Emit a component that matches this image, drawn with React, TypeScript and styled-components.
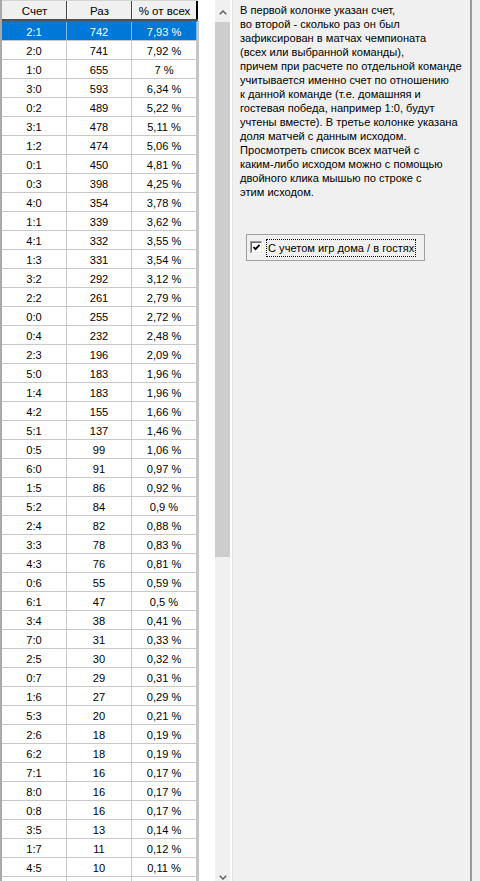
import React from "react";
import styled, { createGlobalStyle } from "styled-components";

const GlobalStyle = createGlobalStyle`
  html, body {
    margin: 0;
    padding: 0;
    background: #f0f0f0;
  }
  body {
    font-family: "Liberation Sans", Arial, sans-serif;
    font-size: 11.1px;
    color: #000;
  }
  * { box-sizing: border-box; }
`;

const Page = styled.div`
  display: flex;
  height: 881px;
  overflow: hidden;
  background: #f0f0f0;
`;

const ListPane = styled.div`
  width: 215px;
  flex: none;
  background: #fff;
  border-left: 2px solid #a9a9a9;
  display: flex;
  flex-direction: column;
`;

const HeaderRow = styled.div`
  display: grid;
  grid-template-columns: 65px 65px 66px;
  height: 21px;
  border-top: 1px solid #d4d4d4;
  border-bottom: 2px solid #505050;
  width: 196px;
`;

const HeaderCell = styled.div<{ $first?: boolean; $last?: boolean }>`
  background: #f0f0f0;
  border-left: 1px solid ${(p) => (p.$first ? "#f0f0f0" : "#ffffff")};
  border-right: ${(p) => (p.$last ? "2px solid #000" : "1px solid #404040")};
  text-align: center;
  padding-top: 2px;
  line-height: 16px;
  height: 18px;
  white-space: nowrap;
  font-size: 11.5px;
`;

const Body = styled.div`
  width: 197px;
  flex: 1;
  border-right: 2px solid #c4c4c4;
  overflow: hidden;
`;

const Row = styled.div<{ $selected?: boolean }>`
  display: grid;
  grid-template-columns: 65px 65px 65px;
  height: 19px;
  border-top: 1px solid ${(p) => (p.$selected ? "#0078d7" : "#c8c8c8")};
  background: ${(p) => (p.$selected ? "#0078d7" : "#fff")};
  color: ${(p) => (p.$selected ? "#fff" : "#000")};
`;

const Cell = styled.div<{ $selected?: boolean }>`
  border-right: 1px solid ${(p) => (p.$selected ? "#7fbbeb" : "#c8c8c8")};
  text-align: center;
  padding-top: 2px;
  line-height: 16px;
  height: 18px;
  white-space: nowrap;
`;

const ScrollBar = styled.div`
  width: 15px;
  flex: none;
  background: #f0f0f0;
  display: flex;
  flex-direction: column;
`;

const ArrowButton = styled.div<{ $h: number; $pad: number }>`
  height: ${(p) => p.$h}px;
  padding-top: ${(p) => p.$pad}px;
  display: flex;
  justify-content: center;
  align-items: flex-start;
  flex: none;
`;

const Thumb = styled.div`
  height: 535px;
  background: #cdcdcd;
  flex: none;
`;

const Track = styled.div`
  flex: 1;
`;

const Divider = styled.div`
  width: 3px;
  flex: none;
  border-left: 2px solid #ffffff;
  border-right: 1px solid #e2e2e2;
`;

const InfoPanel = styled.div`
  width: 239px;
  flex: none;
  border-right: 2px solid #9a9a9a;
  padding: 3px 0 0 7px;
  display: flex;
  flex-direction: column;
`;

const InfoText = styled.div`
  line-height: 14px;
  white-space: nowrap;
`;

const Line = styled.div``;

const GroupBox = styled.div`
  margin-top: 35px;
  margin-left: 6px;
  width: 179px;
  height: 27px;
  border: 1px solid #a0a0a0;
  display: flex;
  align-items: center;
  padding-left: 3px;
`;

const CheckLabel = styled.span`
  margin-left: 3px;
  border: 1px dotted #000;
  padding: 0 1px;
  line-height: 16px;
  white-space: nowrap;
`;

const Chevron: React.FC<{ down?: boolean }> = ({ down }) => (
  <svg width="8" height="5" viewBox="0 0 8 5">
    <polyline
      points={down ? "0.8,0.8 4,4 7.2,0.8" : "0.8,4.2 4,1 7.2,4.2"}
      fill="none"
      stroke="#606060"
      strokeWidth="1.5"
    />
  </svg>
);

const CheckBox: React.FC = () => (
  <svg width="13" height="13" viewBox="0 0 13 13">
    <rect x="0" y="0" width="13" height="13" fill="#ffffff" />
    <rect x="0" y="0" width="12" height="1" fill="#a0a0a0" />
    <rect x="0" y="0" width="1" height="12" fill="#a0a0a0" />
    <rect x="1" y="1" width="10" height="1" fill="#696969" />
    <rect x="1" y="1" width="1" height="10" fill="#696969" />
    <rect x="1" y="11" width="11" height="1" fill="#e3e3e3" />
    <rect x="11" y="1" width="1" height="11" fill="#e3e3e3" />
    <polyline points="3.5,6 5.5,8.2 9.5,3.8" fill="none" stroke="#000" strokeWidth="1.8" />
  </svg>
);

const data: [string, string, string][] = [
  ["2:1", "742", "7,93 %"],
  ["2:0", "741", "7,92 %"],
  ["1:0", "655", "7 %"],
  ["3:0", "593", "6,34 %"],
  ["0:2", "489", "5,22 %"],
  ["3:1", "478", "5,11 %"],
  ["1:2", "474", "5,06 %"],
  ["0:1", "450", "4,81 %"],
  ["0:3", "398", "4,25 %"],
  ["4:0", "354", "3,78 %"],
  ["1:1", "339", "3,62 %"],
  ["4:1", "332", "3,55 %"],
  ["1:3", "331", "3,54 %"],
  ["3:2", "292", "3,12 %"],
  ["2:2", "261", "2,79 %"],
  ["0:0", "255", "2,72 %"],
  ["0:4", "232", "2,48 %"],
  ["2:3", "196", "2,09 %"],
  ["5:0", "183", "1,96 %"],
  ["1:4", "183", "1,96 %"],
  ["4:2", "155", "1,66 %"],
  ["5:1", "137", "1,46 %"],
  ["0:5", "99", "1,06 %"],
  ["6:0", "91", "0,97 %"],
  ["1:5", "86", "0,92 %"],
  ["5:2", "84", "0,9 %"],
  ["2:4", "82", "0,88 %"],
  ["3:3", "78", "0,83 %"],
  ["4:3", "76", "0,81 %"],
  ["0:6", "55", "0,59 %"],
  ["6:1", "47", "0,5 %"],
  ["3:4", "38", "0,41 %"],
  ["7:0", "31", "0,33 %"],
  ["2:5", "30", "0,32 %"],
  ["0:7", "29", "0,31 %"],
  ["1:6", "27", "0,29 %"],
  ["5:3", "20", "0,21 %"],
  ["2:6", "18", "0,19 %"],
  ["6:2", "18", "0,19 %"],
  ["7:1", "16", "0,17 %"],
  ["8:0", "16", "0,17 %"],
  ["0:8", "16", "0,17 %"],
  ["3:5", "13", "0,14 %"],
  ["1:7", "11", "0,12 %"],
  ["4:5", "10", "0,11 %"],
];

const infoLines = [
  "В первой колонке указан счет,",
  "во второй - сколько раз он был",
  "зафиксирован в матчах чемпионата",
  "(всех или выбранной команды),",
  "причем при расчете по отдельной команде",
  "учитывается именно счет по отношению",
  "к данной команде (т.е. домашняя и",
  "гостевая победа, например 1:0, будут",
  "учтены вместе). В третье колонке указана",
  "доля матчей с данным исходом.",
  "Просмотреть список всех матчей с",
  "каким-либо исходом можно с помощью",
  "двойного клика мышью по строке с",
  "этим исходом.",
];

export default function App() {
  return (
    <>
      <GlobalStyle />
      <Page>
        <ListPane>
          <HeaderRow>
            <HeaderCell $first>Счет</HeaderCell>
            <HeaderCell>Раз</HeaderCell>
            <HeaderCell $last>% от всех</HeaderCell>
          </HeaderRow>
          <Body>
            {data.map(([score, count, pct], i) => {
              const sel = i === 0;
              return (
                <Row key={score + i} $selected={sel}>
                  <Cell $selected={sel}>{score}</Cell>
                  <Cell $selected={sel}>{count}</Cell>
                  <Cell $selected={sel}>{pct}</Cell>
                </Row>
              );
            })}
            <Row>
              <Cell />
              <Cell />
              <Cell />
            </Row>
          </Body>
        </ListPane>
        <ScrollBar>
          <ArrowButton $h={22} $pad={10}>
            <Chevron />
          </ArrowButton>
          <Thumb />
          <Track />
          <ArrowButton $h={12} $pad={6}>
            <Chevron down />
          </ArrowButton>
        </ScrollBar>
        <Divider />
        <InfoPanel>
          <InfoText>
            {infoLines.map((l, i) => (
              <Line key={i}>{l}</Line>
            ))}
          </InfoText>
          <GroupBox>
            <CheckBox />
            <CheckLabel>С учетом игр дома / в гостях</CheckLabel>
          </GroupBox>
        </InfoPanel>
      </Page>
    </>
  );
}
